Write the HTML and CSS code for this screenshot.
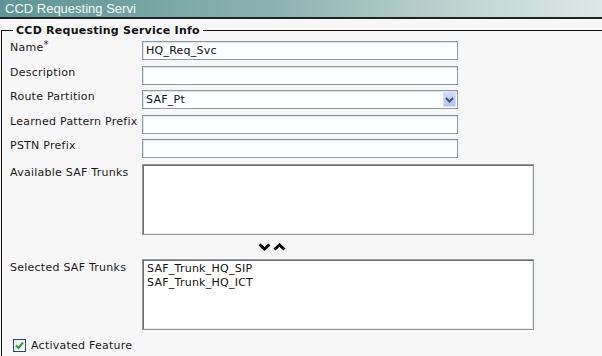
FILE: index.html
```html
<!DOCTYPE html>
<html lang="en">
<head>
  <link rel="stylesheet" href="styles.css">
</head>
<body>
  <div class="titlebar">CCD Requesting Servi</div>

  <fieldset class="info">
    <legend>CCD Requesting Service Info</legend>
    <div class="form-grid">
      <label class="field-label">Name<sup>*</sup></label>
      <div class="text-box">HQ_Req_Svc</div>

      <label class="field-label">Description</label>
      <div class="text-box"></div>

      <label class="field-label">Route Partition</label>
      <div class="text-box select-box">
        <span>SAF_Pt</span>
        <span class="drop-btn">
          <svg width="9" height="6" viewBox="0 0 9 6"><polyline points="1,1 4.5,4.5 8,1" fill="none" stroke="#3c4f78" stroke-width="2"/></svg>
        </span>
      </div>

      <label class="field-label">Learned Pattern Prefix</label>
      <div class="text-box"></div>

      <label class="field-label">PSTN Prefix</label>
      <div class="text-box"></div>

      <label class="field-label list-label">Available SAF Trunks</label>
      <div class="list-box"></div>

      <div class="move-arrows">
        <svg width="13" height="8" viewBox="0 0 13 8"><polyline points="1.5,1.5 6.5,6 11.5,1.5" fill="none" stroke="#000" stroke-width="3"/></svg>
        <svg width="13" height="8" viewBox="0 0 13 8"><polyline points="1.5,6.5 6.5,2 11.5,6.5" fill="none" stroke="#000" stroke-width="3"/></svg>
      </div>

      <label class="field-label list-label">Selected SAF Trunks</label>
      <div class="list-box">
        <div>SAF_Trunk_HQ_SIP</div>
        <div>SAF_Trunk_HQ_ICT</div>
      </div>

      <label class="check-row">
        <span class="check-box">
          <svg width="9" height="9" viewBox="0 0 9 9"><polyline points="1,4.5 3.5,7 8,1.5" fill="none" stroke="#2f9a2f" stroke-width="2"/></svg>
        </span>
        Activated Feature
      </label>
    </div>
  </fieldset>
</body>
</html>
```

FILE: styles.css
```css
body {
  margin: 0;
  background-color: #f7f7f7;
  font-family: "DejaVu Sans", Verdana, sans-serif;
  font-size: 11px;
  letter-spacing: 0.25px;
  color: #1a1a1a;
}
.titlebar {
  height: 17px;
  line-height: 17px;
  padding-left: 5px;
  border-bottom: 2px solid #1e2424;
  background: linear-gradient(to right, #5f9494, #8bb2b1 45%, #c4d8d5 80%, #dde8e6);
  color: #f4f8f8;
  font-family: "Liberation Sans", Arial, sans-serif;
  font-size: 13px;
  letter-spacing: 0;
}
.info {
  margin: 5px 0 0 1px;
  padding: 4px 0 20px 8px;
  border: 1px solid #111;
  border-right: none;
  border-bottom: none;
  min-width: 0;
}
.info legend {
  margin-left: 3px;
  padding: 0 3px;
  font-weight: bold;
  line-height: 13px;
  color: #111;
}
.form-grid {
  display: grid;
  grid-template-columns: 132px auto;
  row-gap: 5.5px;
  align-items: start;
  justify-items: start;
}
.field-label {
  line-height: 13px;
}
.field-label sup {
  font-size: 10px;
  line-height: 0;
  vertical-align: 3px;
}
.list-label {
  padding-top: 2px;
}
.text-box {
  box-sizing: border-box;
  width: 316px;
  height: 19px;
  padding: 0 3px;
  border: 1px solid #8f9aa2;
  box-shadow: inset 1px 1px 0 #dfe4e8;
  background-color: #fdfeff;
  line-height: 17px;
  color: #111;
}
.select-box {
  display: flex;
  justify-content: space-between;
  align-items: center;
  padding-right: 1px;
}
.drop-btn {
  display: flex;
  justify-content: center;
  align-items: center;
  width: 13px;
  height: 15px;
  background: linear-gradient(#cddaf8, #b3c6f2);
  border: 1px solid #d6e0f8;
  box-sizing: border-box;
}
.list-box {
  box-sizing: border-box;
  width: 392px;
  height: 71px;
  padding: 2px 4px;
  border: 1px solid #8f9aa2;
  box-shadow: inset 1px 1px 0 #6c6c6c, inset -1px -1px 0 #e8ece0;
  background-color: #fff;
  line-height: 14px;
  color: #111;
}
.move-arrows {
  grid-column: 2;
  display: flex;
  gap: 2px;
  align-items: center;
  height: 13px;
  padding-left: 116px;
}
.check-row {
  grid-column: 1 / 3;
  display: flex;
  align-items: center;
  gap: 5px;
  margin: 4px 0 0 3px;
  line-height: 13px;
}
.check-box {
  display: flex;
  justify-content: center;
  align-items: center;
  box-sizing: border-box;
  width: 13px;
  height: 13px;
  border: 1px solid #1f4f80;
  background: linear-gradient(135deg, #e4eee4, #ffffff);
}
```
